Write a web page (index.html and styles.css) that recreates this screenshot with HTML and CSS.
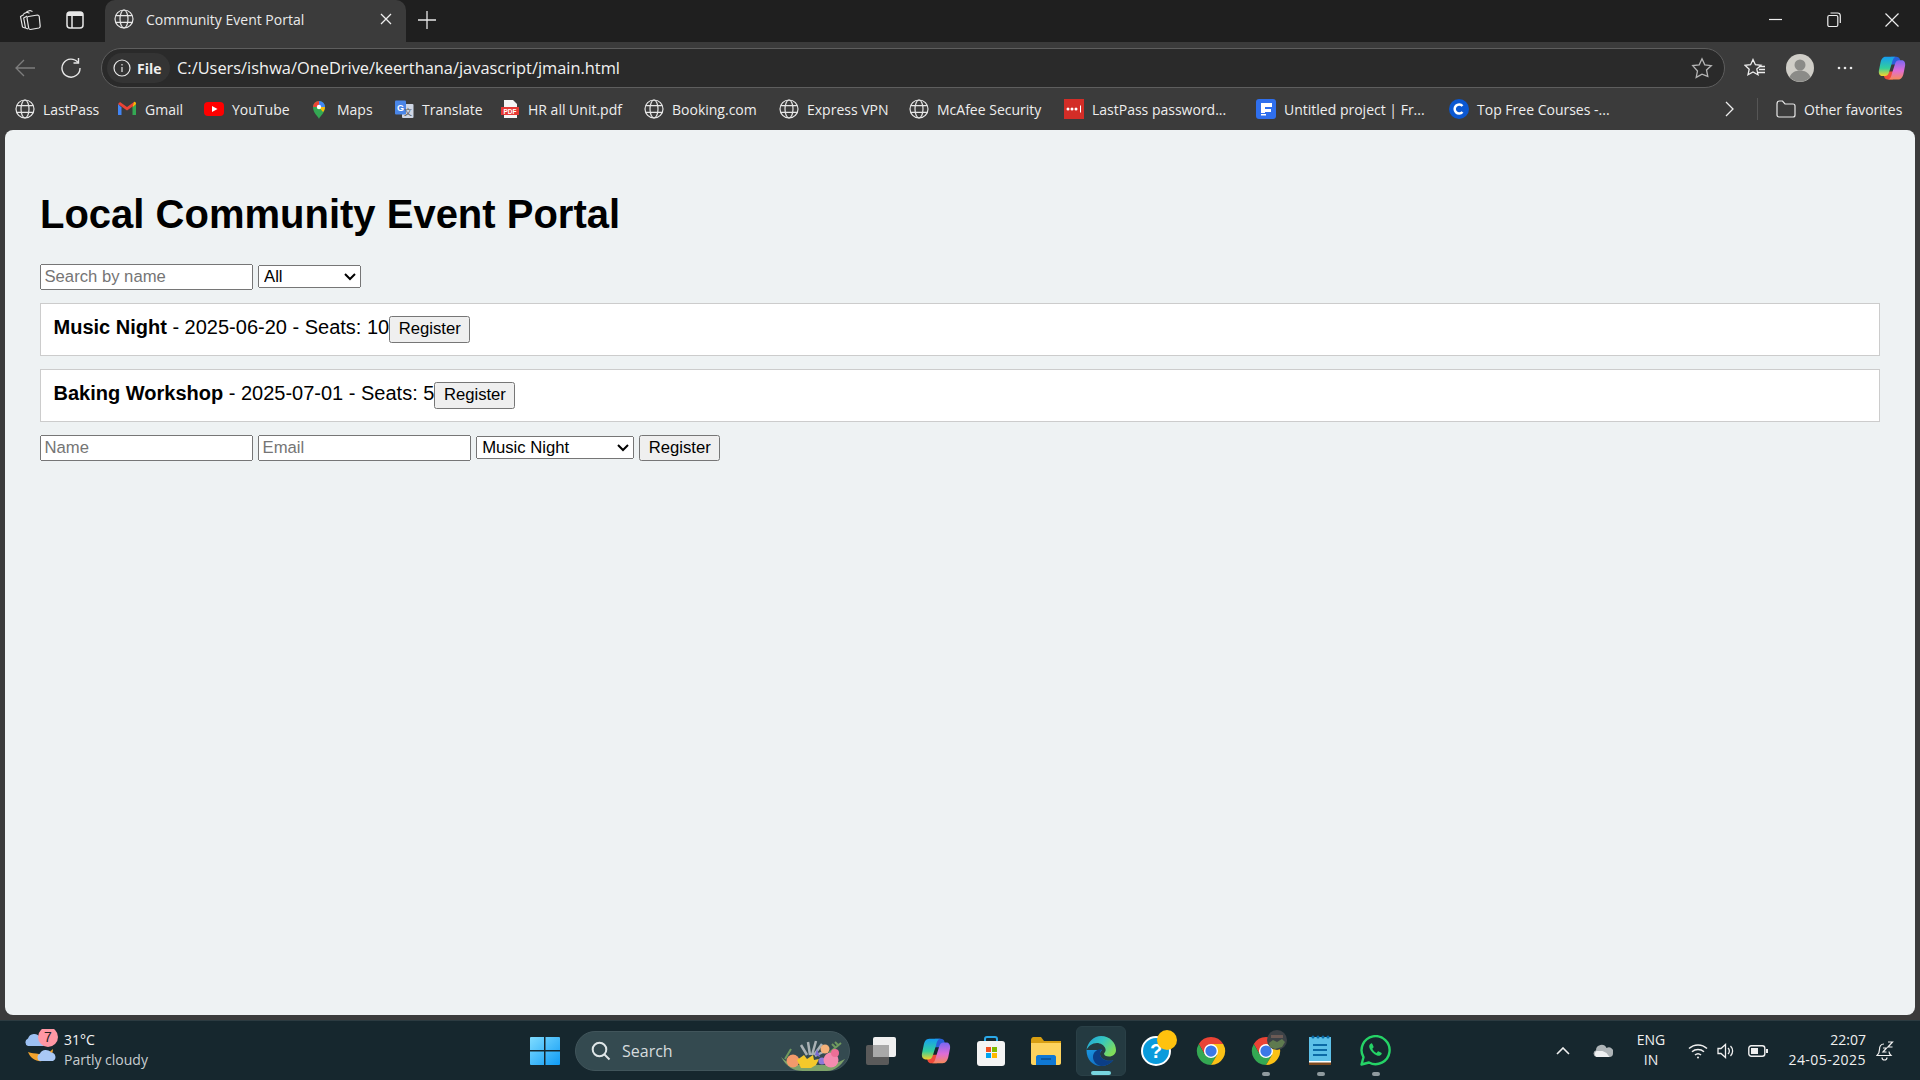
FILE: index.html
```html
<!DOCTYPE html>
<html lang="en">
<head>
<meta charset="utf-8">
<title>Community Event Portal</title>
<link rel="stylesheet" href="styles.css">
</head>
<body>
<svg class="defs" width="0" height="0" aria-hidden="true">
  <defs>
    <symbol id="globe" viewBox="0 0 20 20"><g fill="none" stroke="#e6e6e6" stroke-width="1.2"><circle cx="10" cy="10" r="9"/><ellipse cx="10" cy="10" rx="4" ry="9"/><path d="M1.8 6.6h16.4M1.8 13.4h16.4"/></g></symbol>
    <linearGradient id="cpA" x1="0" y1="0" x2="0" y2="1"><stop offset="0" stop-color="#169cf2"/><stop offset=".6" stop-color="#33cf9c"/><stop offset="1" stop-color="#f4d12c"/></linearGradient>
    <linearGradient id="cpB" x1="0" y1="0" x2="0" y2="1"><stop offset="0" stop-color="#7a68f2"/><stop offset=".55" stop-color="#df6cd6"/><stop offset="1" stop-color="#f78a5a"/></linearGradient>
    <symbol id="copilot" viewBox="0 0 32 32">
      <path d="M15 3h6c2 0 3.500 1 4 3l1.500 6H14z" fill="#2a5fd8"/>
      <path d="M17 29h-6c-2 0-3.500-1-4-3l-1.500-6H18z" fill="#ef4a3a"/>
      <path d="M9 3C5 3 4 6 3 9L1 19c-.5 4 1.500 6 4 6h3c2 0 3.500-1 4.500-4L16 10c1-4 2-7 5-7z" fill="url(#cpA)"/>
      <path d="M23 29c4 0 5-3 6-6l2-10c.5-4-1.500-6-4-6h-3c-2 0-3.500 1-4.500 4L16 22c-1 4-2 7-5 7z" fill="url(#cpB)"/>
    </symbol>
    <symbol id="chrome" viewBox="0 0 32 32">
      <path d="M3 8.500A15 15 0 0 1 29 8.500H16L9.500 20z" fill="#ea4335"/>
      <path d="M3 8.500A15 15 0 0 0 16 31l6.500-11h-13z" fill="#34a853"/>
      <path d="M29 8.500A15 15 0 0 1 16 31l6.500-11L16 8.500z" fill="#fbc116"/>
      <circle cx="16" cy="16" r="7.500" fill="#fff"/><circle cx="16" cy="16" r="6" fill="#3b78e7"/>
    </symbol>
    <linearGradient id="edgeA" x1="0" y1="0" x2="1" y2=".6"><stop offset="0" stop-color="#1f9fdc"/><stop offset=".5" stop-color="#35c6c0"/><stop offset="1" stop-color="#7fdc5a"/></linearGradient>
    <linearGradient id="edgeB" x1="0" y1="0" x2="1" y2="1"><stop offset="0" stop-color="#1a96e0"/><stop offset="1" stop-color="#0f5fb5"/></linearGradient>
  </defs>
</svg>

<header class="titlebar">
  <div class="tb-icon"><svg width="22" height="22" viewBox="0 0 22 22" fill="none" stroke="#e8e8e8" stroke-width="1.200" stroke-linejoin="round"><path d="M7.500 2.800l3.500-1.300 2.500 1"/><path d="M4.500 4.800L8 3.300l2.500 1"/><path d="M6 19L3.500 18 1.500 7.500 5 5.500"/><path d="M9 20l-2.500-1-1.800-10 3.500-2"/><path d="M9.500 7.500l9-1.500c1 0 1.500.5 1.700 1.300l1 10c0 1-.5 1.500-1.300 1.700l-8.500 1.500c-1 0-1.500-.5-1.700-1.300L8 9c0-.8.500-1.300 1.500-1.500z"/></svg></div>
  <div class="tb-icon"><svg width="20" height="20" viewBox="0 0 20 20" fill="none" stroke="#e8e8e8" stroke-width="1.500"><rect x="2" y="2" width="16" height="16" rx="3"/><path d="M7 5.500V18"/><path d="M2 6V5a3 3 0 0 1 3-3h10a3 3 0 0 1 3 3v1z" fill="#e8e8e8" stroke="none"/></svg></div>
  <div class="tab">
    <svg class="tab-globe" width="20" height="20"><use href="#globe"/></svg>
    <span class="tab-title">Community Event Portal</span>
    <svg width="12" height="12" viewBox="0 0 12 12" stroke="#eee" stroke-width="1.300"><path d="M1 1l10 10M11 1L1 11"/></svg>
  </div>
  <div class="newtab"><svg width="18" height="18" viewBox="0 0 18 18" stroke="#e8e8e8" stroke-width="1.300"><path d="M9 0v18M0 9h18"/></svg></div>
  <div class="winbtns">
    <svg width="14" height="14" viewBox="0 0 14 14" stroke="#eee" stroke-width="1.200"><path d="M0 6.500h13"/></svg>
    <svg width="14" height="16" viewBox="0 0 14 16" fill="none" stroke="#eee" stroke-width="1.200"><rect x=".8" y="3.500" width="10" height="11" rx="1.500"/><path d="M3.500 1h7c1.500 0 2.800 1 2.800 2.800V11"/></svg>
    <svg width="14" height="14" viewBox="0 0 14 14" stroke="#eee" stroke-width="1.200"><path d="M.5.500l13 13M13.500.500l-13 13"/></svg>
  </div>
</header>

<nav class="toolbar">
  <div class="tool-back"><svg width="20" height="18" viewBox="0 0 20 18" fill="none" stroke="#7d7d7d" stroke-width="1.300"><path d="M20 9H1M9 1L1 9l8 8"/></svg></div>
  <div class="tool-reload"><svg width="20" height="22" viewBox="0 0 20 22" fill="none" stroke="#e8e8e8" stroke-width="1.400"><path d="M17 5.500A9 9 0 1 0 19 11"/><path d="M17.500 1v5h-5"/></svg></div>
  <div class="address">
    <div class="pill">
      <svg width="18" height="18" viewBox="0 0 18 18" fill="none" stroke="#e8e8e8" stroke-width="1.200"><circle cx="9" cy="9" r="8"/><path d="M9 8v5M9 5v1.400"/></svg>
      <b>File</b>
    </div>
    <span class="url">C:/Users/ishwa/OneDrive/keerthana/javascript/jmain.html</span>
    <svg class="star" width="22" height="22" viewBox="0 0 22 22" fill="none" stroke="#b5b5b5" stroke-width="1.300"><path d="M11 1.800l2.800 6 6.500.8-4.800 4.400 1.300 6.400L11 17.200l-5.800 3.200 1.300-6.400L1.700 8.600l6.500-.8z"/></svg>
  </div>
  <div class="tool-right"><svg width="22" height="20" viewBox="0 0 22 20" fill="none" stroke="#eee" stroke-width="1.300"><path d="M9 1.500l2.400 5.200 5.600.6-4.200 3.800 1.200 5.600L9 14l-5 2.800 1.200-5.600L1 7.300l5.600-.6z"/><path d="M15 8.500h6M15 11.500h6M14 14.500h7"/></svg></div>
  <div class="tool-right"><svg width="28" height="28" viewBox="0 0 28 28"><circle cx="14" cy="14" r="14" fill="#cfcdc7"/><circle cx="14" cy="11" r="5.500" fill="#8b8b88"/><path d="M3.500 23c2-4.500 6-6.500 10.500-6.500S22.500 18.500 24.500 23A14 14 0 0 1 3.500 23z" fill="#8b8b88"/></svg></div>
  <div class="tool-right"><svg width="18" height="4" viewBox="0 0 18 4" fill="#e8e8e8"><circle cx="3" cy="2" r="1.300"/><circle cx="9" cy="2" r="1.300"/><circle cx="15" cy="2" r="1.300"/></svg></div>
  <div class="tool-copilot"><svg width="28" height="28"><use href="#copilot"/></svg></div>
</nav>

<nav class="bookmarks">
  <a class="bm"><svg width="20" height="20"><use href="#globe"/></svg><span>LastPass</span></a>
  <a class="bm"><svg width="20" height="20" viewBox="0 0 20 20"><path d="M1 5v11h3.500V8.500z" fill="#4285f4"/><path d="M15.500 8.500V16H19V5z" fill="#34a853"/><path d="M1 5l9 6.500L19 5l-2-2-7 5-7-5z" fill="#ea4335"/><path d="M15.500 8.500L19 5c0-1.500-1-2.500-2-2z" fill="#fbbc04"/></svg><span>Gmail</span></a>
  <a class="bm"><svg width="20" height="20" viewBox="0 0 20 20"><rect y="3" width="20" height="14" rx="4" fill="#f00"/><path d="M8 7l5.500 3L8 13z" fill="#fff"/></svg><span>YouTube</span></a>
  <a class="bm"><svg width="20" height="20" viewBox="0 0 20 20"><path d="M10 20c-1-3-6-6-6-12a6 6 0 0 1 12 0c0 6-5 9-6 12z" fill="#34a853"/><path d="M4 8a6 6 0 0 1 6-6v6z" fill="#ea4335"/><path d="M10 2a6 6 0 0 1 6 6h-6z" fill="#4285f4"/><path d="M10 8h6c0 2-.8 3.600-2 5z" fill="#fbbc04"/><circle cx="10" cy="8" r="2.200" fill="#fff"/></svg><span>Maps</span></a>
  <a class="bm"><svg width="20" height="20" viewBox="0 0 20 20"><rect x="8" y="5" width="11.500" height="14" rx="1" fill="#cfd6e4"/><rect x="1" y="1.500" width="11" height="14" rx="1" fill="#4a86e8"/><text x="6.500" y="12" class="tr-g">G</text><text x="14" y="16" class="tr-a">文</text></svg><span>Translate</span></a>
  <a class="bm"><svg width="20" height="20" viewBox="0 0 20 20"><path d="M4 1h9l4 4v14H4z" fill="#f5f5f5"/><rect x="1" y="8" width="18" height="8" fill="#e53935"/><text x="10" y="14.500" class="pdf">PDF</text></svg><span>HR all Unit.pdf</span></a>
  <a class="bm"><svg width="20" height="20"><use href="#globe"/></svg><span>Booking.com</span></a>
  <a class="bm"><svg width="20" height="20"><use href="#globe"/></svg><span>Express VPN</span></a>
  <a class="bm"><svg width="20" height="20"><use href="#globe"/></svg><span>McAfee Security</span></a>
  <a class="bm"><svg width="20" height="20" viewBox="0 0 20 20"><rect width="20" height="20" fill="#d32d27"/><g fill="#fff"><circle cx="4" cy="10" r="1.500"/><circle cx="8" cy="10" r="1.500"/><circle cx="12" cy="10" r="1.500"/><rect x="16" y="6.500" width="1" height="7"/></g></svg><span>LastPass password...</span></a>
  <a class="bm"><svg width="20" height="20" viewBox="0 0 20 20"><rect width="20" height="20" rx="3" fill="#2f6fed"/><path d="M5 4h11v4H9v2h6v3H9v1H5z" fill="#fff"/><rect x="5" y="15" width="5" height="1.500" fill="#fff"/></svg><span>Untitled project | Fr...</span></a>
  <a class="bm"><svg width="20" height="20" viewBox="0 0 20 20"><circle cx="10" cy="10" r="10" fill="#0b57d0"/><path d="M13.500 7a4.500 4.500 0 1 0 0 6" fill="none" stroke="#fff" stroke-width="2.500"/></svg><span>Top Free Courses -...</span></a>
  <div class="bm-end">
    <svg width="10" height="16" viewBox="0 0 10 16" fill="none" stroke="#eee" stroke-width="1.300"><path d="M1 1l7 7-7 7"/></svg>
    <i class="bm-div"></i>
    <svg width="20" height="20" viewBox="0 0 20 20" fill="none" stroke="#e8e8e8" stroke-width="1.200"><path d="M1 5c0-2 1-3 2.500-3h3L9 5h8c1.200 0 2 1 2 2v9c0 1.200-.8 2-2 2H3c-1.200 0-2-.8-2-2z"/></svg>
    <span>Other favorites</span>
  </div>
</nav>

<main class="viewport">
  <div class="page">
    <h1>Local Community Event Portal</h1>
    <div>
      <input class="field" type="text" placeholder="Search by name">
      <select class="filter"><option>All</option></select>
    </div>
    <div class="event"><strong>Music Night</strong> - 2025-06-20 - Seats: 10<button class="btn" type="button">Register</button></div>
    <div class="event"><strong>Baking Workshop</strong> - 2025-07-01 - Seats: 5<button class="btn" type="button">Register</button></div>
    <form>
      <input class="field" type="text" placeholder="Name">
      <input class="field" type="email" placeholder="Email">
      <select class="choice"><option>Music Night</option></select>
      <button class="btn" type="button">Register</button>
    </form>
  </div>
</main>

<footer class="taskbar">
  <div class="weather">
    <svg class="wx-icon" width="40" height="44" viewBox="0 0 40 44">
      <path d="M5 23c3 8 11 11 18 8 4-2 7-6 7-11-4 4-9 6-14 5-4-.5-8-1-11-2z" fill="#f3a32c"/>
      <path d="M5 17a4 4 0 0 1 0-7.500 6.500 6.500 0 0 1 12-1 4.500 4.500 0 0 1 3 8.500z" fill="#9cc0f2"/>
      <path d="M17 32a4 4 0 0 1 0-7.500 6.500 6.500 0 0 1 11-1 4.500 4.500 0 0 1 2 8.500z" fill="#a9c8f5"/>
      <circle cx="25" cy="8" r="10" fill="#ff97a4"/>
      <text x="25" y="13" class="wx-num">7</text>
    </svg>
    <div class="wx-text"><span class="wx-temp">31°C</span><span class="wx-desc">Partly cloudy</span></div>
  </div>
  <div class="start"><svg width="30" height="30" viewBox="0 0 30 30"><defs><linearGradient id="win" x1="0" y1="0" x2="1" y2="1"><stop offset="0" stop-color="#7fdcff"/><stop offset="1" stop-color="#0f9bf5"/></linearGradient></defs><path d="M1 1h13v13H0V2a1 1 0 0 1 1-1zM15.500 1H29a1 1 0 0 1 1 1v12H15.500zM0 15.500h14V29H1a1 1 0 0 1-1-1zM15.500 15.500H30V28a1 1 0 0 1-1 1H15.500z" fill="url(#win)"/></svg></div>
  <div class="search">
    <svg width="20" height="20" viewBox="0 0 20 20" fill="none" stroke="#dfe6e8" stroke-width="2"><circle cx="8.500" cy="8.500" r="6.800"/><path d="M13.500 13.500l5 5"/></svg>
    <span>Search</span>
    <svg class="flowers" width="66" height="34" viewBox="0 0 66 34">
      <path d="M0 20c6 10 12 14 22 14h24c8 0 14-6 18-12-8 4-14 6-22 6H20C12 28 6 26 0 20z" fill="#7ea36a"/>
      <g stroke="#aab2b5" stroke-width="2.500" fill="none"><path d="M26 18l-6-10M29 18l-2-13M31 18l4-14M33 18l8-11M34 19l10-5"/></g>
      <g stroke="#6f9a5e" stroke-width="2" fill="none"><path d="M48 16l12-10M4 22l6-10M54 10l-3-3M57 8l-3-3"/></g>
      <path d="M36 12l3 8-5-2z" fill="#7a6bd0"/>
      <circle cx="12" cy="24" r="6.500" fill="#f39a6b"/>
      <path d="M16 23l7-5 3 4 6-4 1 5 5-1-3 6-5 3H20z" fill="#f4c92b"/>
      <circle cx="41" cy="24" r="3.500" fill="#8d79d8"/>
      <circle cx="50" cy="23" r="7.500" fill="#f48bb0"/>
      <circle cx="44" cy="12" r="4.500" fill="#f5b27a"/>
      <circle cx="54" cy="16" r="4" fill="#ee6f96"/>
    </svg>
  </div>
  <div class="apps">
    <div class="app"><svg width="30" height="28" viewBox="0 0 30 28"><rect y="8" width="23" height="20" rx="2" fill="#5a5a5a"/><rect x="7" width="23" height="20" rx="2" fill="#f0f0f0"/><rect x="7" y="8" width="16" height="12" fill="#a9a9a9"/></svg></div>
    <div class="app"><svg width="30" height="30"><use href="#copilot"/></svg></div>
    <div class="app"><svg width="28" height="30" viewBox="0 0 28 30"><path d="M8 6V3c0-1.500 1-2 2-2h8c1 0 2 .5 2 2v3" fill="none" stroke="#2aa8e8" stroke-width="2"/><rect y="5" width="28" height="25" rx="3" fill="#f4f4f4"/><rect x="9" y="11" width="5" height="5" fill="#f25022"/><rect x="15" y="11" width="5" height="5" fill="#7fba00"/><rect x="9" y="17" width="5" height="5" fill="#00a4ef"/><rect x="15" y="17" width="5" height="5" fill="#ffb900"/></svg></div>
    <div class="app"><svg width="30" height="28" viewBox="0 0 30 28"><path d="M0 3c0-1.500 1-3 2.500-3H10l3 4h17v4H0z" fill="#d89f12"/><path d="M0 6h30v20c0 1-1 2-2 2H2c-1 0-2-1-2-2z" fill="#fdd35e"/><path d="M5 28v-8c0-1 1-2 2-2h16c1 0 2 1 2 2v8z" fill="#0f78d4"/><path d="M10 22h10" stroke="#0a4f90" stroke-width="1.500"/></svg></div>
    <div class="app app-active">
      <svg width="30" height="30" viewBox="0 0 30 30">
        <path d="M.500 14C.500 24 7 30 15 30c5 0 9-2 12.500-6-3 1.500-7 1-10.500-1-3.500-2-4-7-1-9z" fill="url(#edgeB)"/>
        <path d="M16 13c-5 0-9 3-9 8 0 4 3 8 8 9 5 0 9-2 12.500-6-3 1.500-7 1-10.500-1-3.500-2-4-7-1-10z" fill="#0b3e86"/>
        <path d="M.500 14C1.500 6 8 0 15 0c9 0 15 7 15 14 0 4-3 6.500-7 6.500-3 0-5-1-5-3 1-1.500 2-2.500 1.500-4.500C18.500 9 14 7 11 7 6 7 2.500 10 .500 14z" fill="url(#edgeA)"/>
      </svg>
      <i class="run run-active"></i>
    </div>
    <div class="app"><svg class="over" width="36" height="36" viewBox="0 0 36 36"><circle cx="15" cy="21" r="14" fill="#0a9bdc" stroke="#fff" stroke-width="2"/><text x="15" y="28" class="help">?</text><circle cx="26" cy="10" r="10" fill="#ffc20e"/></svg></div>
    <div class="app"><svg width="30" height="30"><use href="#chrome"/></svg></div>
    <div class="app">
      <svg class="over" width="36" height="36" viewBox="0 0 36 36"><use href="#chrome" x="0" y="6" width="30" height="30"/><circle cx="26" cy="10" r="10" fill="#3c4247"/><path d="M18 13l4-3 4 2 5-3 3 3-3 5-7 2-5-2z" fill="#5f7a4f"/><path d="M20 5h12v3H20z" fill="#6b5a55"/></svg>
      <i class="run"></i>
    </div>
    <div class="app">
      <svg width="24" height="32" viewBox="0 0 24 32"><rect y="2" width="22" height="28" fill="#5cc0e8"/><rect y="26" width="22" height="4" fill="#7d4a1f"/><rect y="26" width="22" height="1.500" fill="#fff"/><g fill="#0b6aa6"><circle cx="4" cy="2" r="1.500"/><circle cx="9" cy="2" r="1.500"/><circle cx="14" cy="2" r="1.500"/><circle cx="19" cy="2" r="1.500"/><rect x="4" y="9" width="14" height="2"/><rect x="4" y="14" width="14" height="2"/><rect x="4" y="19" width="14" height="2"/></g></svg>
      <i class="run"></i>
    </div>
    <div class="app">
      <svg width="31" height="31" viewBox="0 0 31 31"><path d="M1.500 29.500l2-7.300A14 14 0 1 1 9 27.500z" fill="none" stroke="#25d366" stroke-width="2.400" stroke-linejoin="round"/><path d="M11 8.500c-1.500.8-2.300 2.500-1.500 4.500 1.500 3.600 4 6 7.500 7.500 2 .8 3.800 0 4.600-1.500.3-.6.200-1-.3-1.300l-2.600-1.300c-.5-.2-.8-.1-1.100.3l-1 1.200c-2-.8-3.500-2.300-4.300-4.200l1-1c.4-.4.400-.7.200-1.100L12.400 9c-.3-.6-.8-.8-1.400-.5z" fill="#25d366"/></svg>
      <i class="run"></i>
    </div>
  </div>
  <div class="tray">
    <div class="t-chev"><svg width="14" height="8" viewBox="0 0 14 8" fill="none" stroke="#f0f0f0" stroke-width="1.600"><path d="M1 7l6-6 6 6"/></svg></div>
    <div class="t-cloud"><svg width="20" height="13" viewBox="0 0 20 13"><path d="M3.500 13a3.500 3.500 0 0 1-.5-6.800A5.500 5.500 0 0 1 13.500 4 4.500 4.500 0 0 1 20 9.500c0 2-1.200 3.500-3.500 3.500z" fill="#aeb4b7"/><path d="M3.500 13a3.500 3.500 0 0 1 0-6h6l4 2 3 4z" fill="#eef0f1"/></svg></div>
    <div class="t-lang"><span>ENG</span><span>IN</span></div>
    <div class="t-wifi"><svg width="20" height="16" viewBox="0 0 20 16" fill="none" stroke="#f0f0f0" stroke-width="1.500"><path d="M1 5.500a13 13 0 0 1 18 0M4 8.800a9 9 0 0 1 12 0M7 12a4.500 4.500 0 0 1 6 0"/><circle cx="10" cy="14.500" r="1" fill="#f0f0f0" stroke="none"/></svg></div>
    <div class="t-vol"><svg width="20" height="16" viewBox="0 0 20 16" fill="none" stroke="#f0f0f0" stroke-width="1.300"><path d="M1 5.500v5h3l4.500 4V1.500L4 5.500z"/><path d="M11 5a4 4 0 0 1 0 6M13.500 3a7 7 0 0 1 0 10"/></svg></div>
    <div class="t-batt"><svg width="20" height="12" viewBox="0 0 20 12"><rect x=".8" y=".8" width="16" height="10.400" rx="2.500" fill="none" stroke="#f0f0f0" stroke-width="1.400"/><rect x="3" y="3" width="7" height="6" fill="#f0f0f0"/><rect x="18" y="4" width="2" height="4" fill="#f0f0f0"/></svg></div>
    <div class="t-time"><span>22:07</span><span class="t-date">24-05-2025</span></div>
    <div class="t-bell"><svg width="18" height="20" viewBox="0 0 18 20" fill="none" stroke="#f0f0f0" stroke-width="1.200"><path d="M8 3C4.500 3 3.500 6 3.500 8.500c0 3-1 4.500-2.500 6h14c-1-1-2-2-2-4M6 16.500a2.500 2.500 0 0 0 5 0"/><path d="M7 7h3.500L7 11h3.500M12 1h4.500L12 6h4.500"/></svg></div>
  </div>
</footer>
</body>
</html>
```

FILE: styles.css
```css
* { box-sizing: border-box; }
html, body { margin: 0; height: 100%; }
body {
  width: 1920px;
  height: 1080px;
  overflow: hidden;
  display: flex;
  flex-direction: column;
  background: #3b3b3b;
  font-family: "Open Sans", "Liberation Sans", sans-serif;
  color: #f0f0f0;
}
svg { display: block; flex: none; }
.defs { position: absolute; }

/* title bar */
.titlebar { height: 42px; flex: none; background: #1f1f1f; display: flex; align-items: flex-start; padding-left: 8px; }
.tb-icon { width: 44px; height: 40px; display: flex; align-items: center; justify-content: center; margin-right: 1px; }
.tab { width: 301px; height: 42px; margin-left: 7px; background: #3b3b3b; border-radius: 10px 10px 0 0; display: flex; align-items: center; padding: 0 14px 4px 9px; position: relative; }
.tab-globe { margin-right: 12px; }
.tab-title { flex: 1; font-size: 14px; color: #eaeaea; }
.newtab { width: 42px; height: 40px; display: flex; justify-content: center; align-items: center; }
.winbtns { margin-left: auto; height: 40px; display: flex; align-items: center; gap: 44px; padding-right: 21px; }

/* toolbar */
.toolbar { height: 46px; flex: none; background: #3b3b3b; display: flex; align-items: center; padding-top: 6px; }
.tool-back { width: 50px; display: flex; justify-content: center; }
.tool-reload { width: 41px; display: flex; justify-content: center; }
.address { width: 1624px; height: 40px; margin: 0 7px 0 10px; background: #2a2a2a; border: 1px solid #5e5e5e; border-radius: 20px; display: flex; align-items: center; padding: 0 11px 0 5px; flex: none; }
.pill { width: 63px; height: 30px; border-radius: 15px; background: #343434; display: flex; align-items: center; gap: 6px; padding-left: 6px; font-size: 14px; color: #eee; flex: none; }
.url { margin: -2px 0 0 7px; font-size: 16.400px; flex: 1; color: #f2f2f2; }
.tool-right { width: 45px; display: flex; justify-content: center; flex: none; }
.tool-copilot { width: 50px; display: flex; justify-content: center; flex: none; }

/* bookmarks */
.bookmarks { height: 42px; flex: none; background: #3b3b3b; display: flex; align-items: center; padding-left: 15px; font-size: 14px; color: #eeeeee; }
.bm { display: flex; align-items: center; gap: 8px; flex: none; white-space: nowrap; }
.bm:nth-child(1) { width: 102px; }
.bm:nth-child(2) { width: 87px; }
.bm:nth-child(3) { width: 105px; }
.bm:nth-child(4) { width: 85px; }
.bm:nth-child(5) { width: 106px; }
.bm:nth-child(6) { width: 144px; }
.bm:nth-child(7) { width: 135px; }
.bm:nth-child(8) { width: 130px; }
.bm:nth-child(9) { width: 155px; }
.bm:nth-child(10) { width: 192px; }
.bm:nth-child(11) { width: 193px; }
.bm:nth-child(12) { width: 276px; }
.bm-end { display: flex; align-items: center; flex: none; }
.bm-div { width: 1px; height: 22px; background: #565656; margin: 0 18px 0 22px; }
.bm-end span { margin-left: 8px; }
.tr-g { font: bold 9px "Liberation Sans", sans-serif; fill: #fff; text-anchor: middle; }
.tr-a { font: 8px "Noto Sans CJK SC", sans-serif; fill: #555; text-anchor: middle; }
.pdf { font: bold 6.500px "Liberation Sans", sans-serif; fill: #fff; text-anchor: middle; }

/* page viewport */
.viewport { height: 885px; flex: none; margin: 0 5px; background: #eef2f3; border-radius: 8px; overflow: hidden; }
.page { zoom: 1.25; padding: 28px; font-family: "Liberation Sans", Arial, sans-serif; color: #000; font-size: 16px; }
.page h1 { font-size: 32px; margin: 21.440px 0; font-weight: bold; }
.page input, .page select, .page button { font-family: "Liberation Sans", Arial, sans-serif; font-size: 13.333px; }
.field { width: 170px; }
.filter { width: 82px; }
.choice { width: 126px; }
.event { background: #fff; border: 1px solid #ccc; padding: 10px; margin: 10px 0; }

/* taskbar */
.taskbar { height: 60px; flex: none; margin-top: 5px; background: #16272e; border-top: 1px solid #2c3b41; display: flex; align-items: center; position: relative; }
.weather { width: 517px; flex: none; display: flex; align-items: center; padding-left: 23px; }
.wx-icon { margin-right: 1px; }
.wx-text { display: flex; flex-direction: column; font-size: 14px; line-height: 20px; margin-top: -2px; }
.wx-temp { color: #f4f4f4; }
.wx-desc { color: #c8cdd0; }
.wx-num { font: 14px "Liberation Sans", sans-serif; fill: #222; text-anchor: middle; }
.start { width: 55px; flex: none; display: flex; justify-content: center; }
.search { width: 275px; height: 40px; margin: 0 3px; flex: none; border-radius: 20px; background: #344a50; border: 1px solid #41555b; display: flex; align-items: center; padding-left: 15px; position: relative; font-size: 16px; color: #d6dcde; }
.search span { margin-left: 11px; }
.flowers { margin-left: auto; margin-right: 2px; margin-top: 6px; }
.apps { display: flex; flex: none; }
.app { width: 55px; height: 50px; display: flex; align-items: center; justify-content: center; position: relative; }
.app-active { background: #243a41; border-radius: 6px; border: 1px solid #2a4047; width: 50px; margin: 0 2.500px; }
.run { position: absolute; bottom: 0; left: 50%; width: 8px; height: 4px; margin-left: -4px; border-radius: 2px; background: #8f9a9e; }
.run-active { width: 20px; margin-left: -10px; background: #78d6e0; }
.over { margin-top: -5px; margin-left: 6px; }
.help { font: bold 20px "Liberation Sans", sans-serif; fill: #fff; text-anchor: middle; }
.tray { display: flex; align-items: center; margin-left: auto; padding-right: 16px; flex: none; }
.tray > div { display: flex; justify-content: center; align-items: center; flex: none; }
.t-chev { width: 36px; }
.t-cloud { width: 44px; }
.t-lang { width: 52px; flex-direction: column; font-size: 14px; line-height: 20px; margin-top: -2px; }
.t-wifi { width: 42px; }
.t-vol { width: 16px; }
.t-batt { width: 46px; }
.tray > .t-time { width: 85px; flex-direction: column; align-items: flex-end; font-size: 14px; line-height: 20px; margin-top: -2px; }
.t-date { letter-spacing: .45px; }
.t-bell { width: 38px; }
```
